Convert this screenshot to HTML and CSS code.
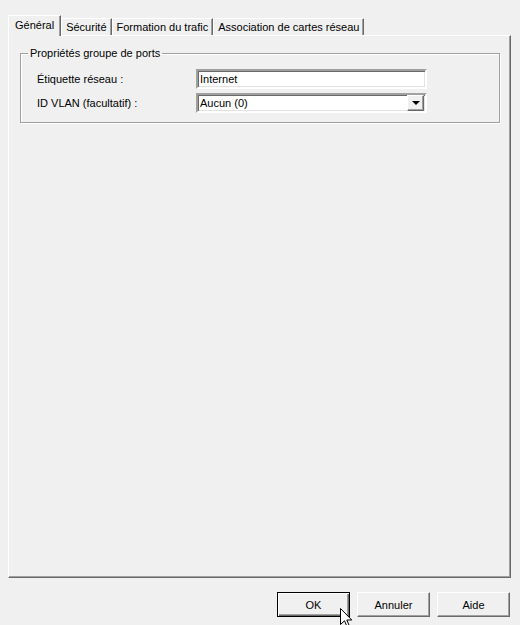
FILE: index.html
```html
<!DOCTYPE html>
<html>
<head>
    <meta charset="UTF-8">
    <title>Propriétés</title>
    <link rel="stylesheet" href="styles.css">
</head>
<body>
    <div class="dialog">
        <div class="tabs">
            <div class="tab selected">Général</div>
            <div class="tab">Sécurité</div>
            <div class="tab">Formation du trafic</div>
            <div class="tab">Association de cartes réseau</div>
        </div>

        <div class="panel">
            <fieldset class="group">
                <legend>Propriétés groupe de ports</legend>
                <div class="form-grid">
                    <label>Étiquette réseau :</label>
                    <div class="field">Internet</div>
                    <label>ID VLAN (facultatif) :</label>
                    <div class="field combo">
                        <span>Aucun (0)</span>
                        <span class="drop-btn"><span class="arrow"></span></span>
                    </div>
                </div>
            </fieldset>
        </div>

        <div class="buttons">
            <button class="btn default">OK</button>
            <button class="btn">Annuler</button>
            <button class="btn">Aide</button>
        </div>

        <svg class="cursor" width="13" height="20" viewBox="0 0 13 20">
            <path d="M0.5 0.5 L0.5 16.5 L4.5 12.8 L7 18.5 L9.2 17.6 L6.8 12 L11.8 12 Z" fill="#fff" stroke="#000" stroke-width="1"/>
        </svg>
    </div>
</body>
</html>
```

FILE: styles.css
```css
body {
    margin: 0;
    background-color: #f0f0f0;
    font-family: "Liberation Sans", Arial, sans-serif;
    font-size: 11px;
    color: #000;
}

.dialog {
    position: relative;
    width: 520px;
    height: 625px;
    overflow: hidden;
}

/* onglets */
.tabs {
    display: flex;
    align-items: flex-end;
    height: 20px;
    margin: 15px 0 0 9px;
}

.tab {
    height: 16px;
    line-height: 16px;
    padding: 0 4px;
    border-top: 1px solid #fff;
    border-left: 1px solid #fff;
    border-right: 1px solid #696969;
    box-shadow: inset -1px 0 #a0a0a0;
}

    .tab.selected {
        position: relative;
        z-index: 1;
        height: 20px;
        line-height: 18px;
        padding: 0 6px;
        margin-bottom: -1px;
        margin-left: -1px;
        background-color: #f0f0f0;
    }

.panel {
    height: 541px;
    margin: 0 9px 0 8px;
    border: 1px solid;
    border-color: #fff #696969 #696969 #fff;
    box-shadow: inset -1px -1px #a0a0a0;
}

/* cadre groupe */
.group {
    margin: 11px 11px 0 11px;
    padding: 10px 0 9px 16px;
    border: 1px solid #a0a0a0;
    box-shadow: inset 1px 1px #fff, 1px 1px #fff;
    width: 462px;
}

    .group legend {
        padding: 0 2px;
        margin-left: -9px;
    }

.form-grid {
    display: grid;
    grid-template-columns: 159px 231px;
    row-gap: 4px;
    align-items: center;
}

.field {
    box-sizing: border-box;
    height: 20px;
    padding: 0 2px;
    line-height: 16px;
    background-color: #fff;
    border: 2px solid;
    border-color: #a0a0a0 #fff #fff #a0a0a0;
    box-shadow: inset 1px 1px #696969, inset -1px -1px #e3e3e3;
}

.combo {
    display: flex;
    justify-content: space-between;
    padding-right: 1px;
}

.drop-btn {
    display: flex;
    align-items: center;
    justify-content: center;
    box-sizing: border-box;
    width: 17px;
    height: 16px;
    background-color: #f0f0f0;
    border: 1px solid;
    border-color: #fff #696969 #696969 #fff;
    box-shadow: inset -1px -1px #a0a0a0;
}

.arrow {
    width: 0;
    height: 0;
    border-left: 4px solid transparent;
    border-right: 4px solid transparent;
    border-top: 4px solid #000;
}

/* boutons */
.buttons {
    display: flex;
    justify-content: flex-end;
    gap: 7px;
    margin: 14px 10px 0 0;
}

.btn {
    width: 73px;
    height: 25px;
    font-family: "Liberation Sans", Arial, sans-serif;
    font-size: 11px;
    color: #000;
    background-color: #f0f0f0;
    border: 1px solid;
    border-color: #fff #696969 #696969 #fff;
    box-shadow: inset -1px -1px #a0a0a0;
    padding: 0;
}

    .btn.default {
        border-color: #000;
        box-shadow: inset 1px 1px #fff, inset -1px -1px #696969, inset -2px -2px #a0a0a0;
    }

.cursor {
    position: absolute;
    left: 340px;
    top: 608px;
}
```
